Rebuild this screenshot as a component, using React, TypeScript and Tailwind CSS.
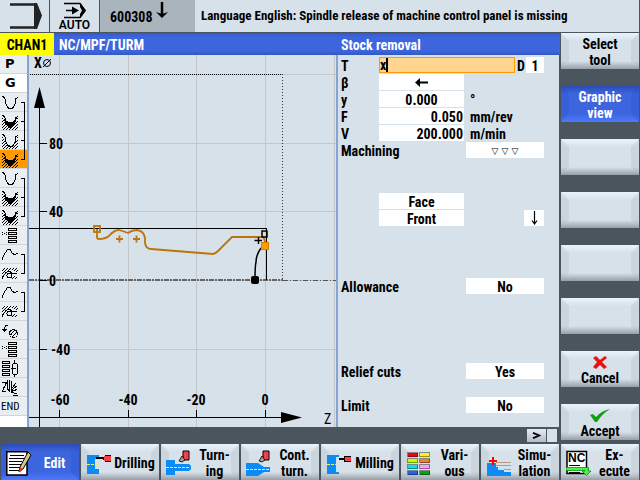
import React from "react";

const FONT = "font-['Liberation_Sans_Narrow','Roboto_Condensed','Liberation_Sans',sans-serif]";

type Bracket = "top" | "mid" | "bottom" | "none";
type StepKind =
  | "P" | "G" | "END"
  | "contour" | "stock" | "residual"
  | "pattern" | "curve" | "mill" | "drill" | "pocket" | "thread";

const STEPS: { kind: StepKind; bracket: Bracket; active?: boolean; label: string }[] = [
  { kind: "P", bracket: "none", label: "Program header" },
  { kind: "G", bracket: "none", label: "G code" },
  { kind: "contour", bracket: "top", label: "Contour" },
  { kind: "stock", bracket: "mid", label: "Stock removal" },
  { kind: "residual", bracket: "mid", label: "Residual removal" },
  { kind: "stock", bracket: "bottom", active: true, label: "Stock removal" },
  { kind: "contour", bracket: "top", label: "Contour" },
  { kind: "stock", bracket: "mid", label: "Stock removal" },
  { kind: "stock", bracket: "bottom", label: "Stock removal" },
  { kind: "pattern", bracket: "none", label: "Positions" },
  { kind: "curve", bracket: "top", label: "Contour" },
  { kind: "mill", bracket: "bottom", label: "Path milling" },
  { kind: "curve", bracket: "top", label: "Contour" },
  { kind: "mill", bracket: "bottom", label: "Path milling" },
  { kind: "drill", bracket: "none", label: "Centering" },
  { kind: "pattern", bracket: "none", label: "Positions" },
  { kind: "pocket", bracket: "none", label: "Pocket" },
  { kind: "thread", bracket: "none", label: "Thread" },
  { kind: "END", bracket: "none", label: "End of program" },
];

const BRACKETS: Record<Bracket, string> = {
  top: "M21 9.5H24.5V19",
  mid: "M24.5 0V19M21 9.5H24",
  bottom: "M24.5 0V9.5H21",
  none: "",
};

const VALLEY = "M2 3.500H3.500L5.500 7V10L8.500 15.500H12.500L15.500 10V6L18 4";

function StepGlyph({ kind }: { kind: StepKind }) {
  switch (kind) {
    case "contour":
      return <path d={VALLEY} fill="none" stroke="#000" />;
    case "stock":
      return (
        <g>
          <path d="M2 4L5 10 8 14H13L18 5V18H2Z" fill="url(#hatch)" />
          <path d="M2 3.500H3.500L5.500 7V9M15.500 9V6L18 4" fill="none" stroke="#000" />
          <path d="M4 7L8 9.500H13L17 6L15 12L12 15.500H9L5 11Z" fill="#000" />
        </g>
      );
    case "residual":
      return (
        <g>
          <path d="M2 4L5 10 8 14H13L18 5V18H2Z" fill="url(#hatch)" />
          <path d={VALLEY} fill="none" stroke="#000" />
        </g>
      );
    case "pattern":
      return (
        <g fill="none" stroke="#000">
          <path d="M8.500 2.500H16.500V4.500H8.500ZM8.500 6.500H16.500V8.500H8.500ZM8.500 10.500H16.500V12.500H8.500ZM8.500 14.500H16.500V16.500H8.500Z" />
          <path d="M2 6.500H3M4 7.500H5M6 6.500H7M2 8.500H3M6 8.500H7" />
        </g>
      );
    case "curve":
      return <path d="M2 14.500L3.500 11 5.500 7.500 7.500 4.500H10L12.500 8.500 14.500 9.500 18 8.500" fill="none" stroke="#000" />;
    case "mill":
      return (
        <g>
          <path d="M2 4H18V8L14 7 10 6 6 8 3 14H2Z" fill="url(#hatch)" />
          <path d="M2 15L4 11 6 8.500 9 7 12 9H17" fill="none" stroke="#000" />
          <circle cx="9.500" cy="11.500" r="2.500" fill="none" stroke="#000" />
          <path d="M11 14L17 11V15H11Z" fill="url(#hatch)" />
        </g>
      );
    case "drill":
      return (
        <g fill="none" stroke="#000">
          <path d="M8 4.500H6L4.500 6.500V10" />
          <path d="M2 8H7L4.500 11.500Z" fill="#000" stroke="none" />
          <circle cx="13.500" cy="12.500" r="4" />
          <path d="M10.500 14L14.500 9.500M12 16L17 11" />
        </g>
      );
    case "pocket":
      return (
        <g fill="none" stroke="#000">
          <path d="M2.500 2.500H9.500V4.500H2.500ZM2.500 6.500H9.500V8.500H2.500ZM2.500 10.500H9.500V12.500H2.500ZM2.500 14.500H9.500V16.500H2.500Z" />
          <path d="M14.500 1V4M14.500 16V18M11 9.500H16" />
          <rect x="12.500" y="4.500" width="5" height="11" rx="2" />
        </g>
      );
    case "thread":
      return (
        <g fill="none" stroke="#000">
          <path d="M2 4.500H6.500L2.500 13.500H6M7.500 2V11L9.500 13.500V2M11.500 3V10" />
          <path d="M11 11.500L16 5M11 12.500L17 8M11 13.500L17 11.500M11 14.500L17 15.500M13 17.500H18M3 10L6 7" />
        </g>
      );
    default:
      return null;
  }
}

function StepList() {
  return (
    <ol className="flex w-[27px] shrink-0 flex-col bg-white" aria-label="Program steps">
      {STEPS.map((step, i) => {
        const tone = step.active ? "bg-[#ff9a00]" : step.kind === "G" ? "bg-white" : "bg-[#e9eef2]";
        const isText = step.kind === "P" || step.kind === "G" || step.kind === "END";
        return (
          <li key={i} className={`h-[19px] shadow-[inset_0_-1px_0_#d0d5d9] ${tone}`}>
            {isText ? (
              <span
                className={
                  step.kind === "END"
                    ? "block pl-px text-[11px] leading-[19px]"
                    : "block pl-[5px] font-['DejaVu_Sans',sans-serif] text-[13px] leading-[18px] font-bold"
                }
              >
                {step.kind}
              </span>
            ) : (
              <svg className="block h-[19px] w-[27px]" viewBox="0 0 27 19" shapeRendering="crispEdges" role="img" aria-label={step.label}>
                <StepGlyph kind={step.kind} />
                <path d={BRACKETS[step.bracket]} fill="none" stroke="#000" />
              </svg>
            )}
          </li>
        );
      })}
    </ol>
  );
}

function Graph() {
  return (
    <svg className="block min-w-0 flex-1" viewBox="29 55 307 372" role="img" aria-label="Workpiece contour">
      <defs>
        <pattern id="hatch" width="3" height="3" patternUnits="userSpaceOnUse">
          <path d="M0 2H1V3H0ZM1 1H2V2H1ZM2 0H3V1H2Z" fill="#000" />
        </pattern>
      </defs>
      <g shapeRendering="crispEdges" fill="none">
        <path d="M59.500 55V427M128.500 55V427M196.500 55V427M265.500 55V427M334.500 55V427M29 74.500H336M29 143.500H336M29 211.500H336M29 280.500H336M29 349.500H336" stroke="#c6c6c8" />
        <path d="M30 74.500H282" stroke="#000" strokeDasharray="1 1" />
        <path d="M282.500 74V280" stroke="#333" strokeDasharray="1 2" />
        <path d="M29 280H283" stroke="#666" strokeWidth="2" strokeDasharray="5 1 2 1" />
        <path d="M283 280.500H336" stroke="#555" strokeDasharray="5 2 1 2" />
        <path d="M39.500 100V427M29 417.500H285M40 143.500H47M40 211.500H47M40 280.500H47M40 349.500H47M59.500 410V417M128.500 410V417M196.500 410V417M265.500 410V417" stroke="#000" />
        <path d="M29 228.500H266.500V280" stroke="#000" />
      </g>
      <path d="M39.500 87L45 108H34ZM302 417.500L281 412V423Z" />
      <g className="text-[14px] font-bold">
        <text x="34" y="68">X</text>
        <text x="324" y="424" className="font-normal">Z</text>
      </g>
      <g fill="none" stroke="#000">
        <circle cx="47" cy="63" r="3.500" />
        <path d="M43 67L51 59" />
      </g>
      <g className="text-[14px] font-bold">
        <text x="49" y="149">80</text>
        <text x="49" y="217">40</text>
        <text x="49" y="286">0</text>
        <text x="51" y="355">-40</text>
        <text x="60" y="405" textAnchor="middle">-60</text>
        <text x="128" y="405" textAnchor="middle">-40</text>
        <text x="196" y="405" textAnchor="middle">-20</text>
        <text x="265" y="405" textAnchor="middle">0</text>
      </g>
      <g fill="none" stroke="#bd7408" strokeWidth="1.800">
        <path d="M97 229V237Q97 239 99 239Q105 239 109 236Q114 230 119 230Q123 231 128 233Q132 230 137 230Q144 231 145 238V243Q146 249 151 249L213 254Q215 254 218 251L232 237H263Q265 239 265 244" />
        <path d="M116 239H123M119.500 235.500V242.500M133 239H140M136.500 235.500V242.500" />
        <rect x="94" y="226" width="6" height="6" />
      </g>
      <path d="M261 248Q256 255 256 262Q255 266 255 280" fill="none" stroke="#000" strokeWidth="1.500" />
      <rect x="251" y="276" width="8" height="8" rx="2" />
      <path d="M254.500 240.500H262M258.500 237V244" stroke="#000" strokeWidth="1.500" />
      <rect x="262" y="231" width="5" height="6" fill="none" stroke="#000" strokeWidth="1.500" />
      <rect x="261.500" y="242.500" width="7" height="7" fill="#ff9a00" stroke="#d88200" />
    </svg>
  );
}

const LABEL = "w-[38px] shrink-0";
const VALUE = "h-4 w-[85px] shrink-0 rounded-none bg-white px-px pt-px leading-4 outline-none";
const PICK = "h-4 appearance-none rounded-none bg-white p-0 pt-px leading-4 outline-none [text-align-last:center]";

function Choice({ id, label, value, className, row }: { id: string; label: string; value: string; className?: string; row: string }) {
  return (
    <div className={`flex h-[17px] justify-between pr-[15px] ${row}`}>
      <label htmlFor={id}>{label}</label>
      <select id={id} defaultValue={value} className={`${PICK} w-[78px] ${className ?? ""}`}>
        <option>{value}</option>
      </select>
    </div>
  );
}

function ParameterForm() {
  return (
    <form className="w-[222px] shrink-0 border-r border-[#4b555e] pt-[2px] pl-[3px] text-[14px] leading-[19px] font-bold" onSubmit={(e) => e.preventDefault()}>
      <div className="flex h-[17px]">
        <label htmlFor="tool" className={LABEL}>T</label>
        <div className="flex h-4 w-[136px] border border-[#ff9a00] bg-[#ffd58f]">
          <input id="tool" defaultValue="x" className="w-[6px] bg-transparent p-0 leading-[14px] outline-none" />
          <span className="w-[2px] bg-black" />
        </div>
        <label htmlFor="edge" className="w-[11px] pl-[2px]">D</label>
        <input id="edge" defaultValue="1" className="h-4 w-[18px] bg-white pt-px text-center leading-4 outline-none" />
      </div>
      <div className="flex h-[17px]">
        <label htmlFor="beta" className={LABEL}>β</label>
        <button type="button" id="beta" aria-label="Holder direction" className={`${VALUE} flex items-center justify-center`}>
          <svg width="13" height="9" viewBox="0 0 13 9"><path d="M0 4.500L5 0V3.500H13V5.500H5V9Z" /></svg>
        </button>
      </div>
      <div className="flex h-[17px]">
        <label htmlFor="gamma" className={LABEL}>y</label>
        <input id="gamma" defaultValue="0.000" className={`${VALUE} text-center`} />
        <span className="pl-[6px]">°</span>
      </div>
      <div className="flex h-[17px]">
        <label htmlFor="feed" className={LABEL}>F</label>
        <input id="feed" defaultValue="0.050" className={`${VALUE} text-right`} />
        <span className="pl-[6px]">mm/rev</span>
      </div>
      <div className="flex h-[17px]">
        <label htmlFor="speed" className={LABEL}>V</label>
        <input id="speed" defaultValue="200.000" className={`${VALUE} text-right`} />
        <span className="pl-[6px]">m/min</span>
      </div>
      <Choice id="machining" label="Machining" value="▽ ▽ ▽" row="" className="font-['DejaVu_Sans',sans-serif] text-[9px] font-bold" />
      <div className="mt-[34px] flex h-[17px] pl-[38px]">
        <select aria-label="Machining side" className={`${PICK} w-[85px]`}><option>Face</option></select>
      </div>
      <div className="flex h-[17px] justify-between pr-[15px] pl-[38px]">
        <select aria-label="Machining position" className={`${PICK} w-[85px]`}><option>Front</option></select>
        <button type="button" aria-label="Infeed direction" className="flex h-4 w-5 items-center justify-center bg-white">
          <svg width="7" height="14" viewBox="0 0 7 14"><path d="M3.500 0V13M1 9.500L3.500 13L6 9.500" fill="none" stroke="#000" strokeWidth="1.200" /></svg>
        </button>
      </div>
      <Choice id="allowance" label="Allowance" value="No" row="mt-[51px]" />
      <Choice id="relief" label="Relief cuts" value="Yes" row="mt-[68px]" />
      <Choice id="limit" label="Limit" value="No" row="mt-[17px]" />
    </form>
  );
}

const KEY =
  "relative isolate flex h-9 w-full items-center text-[14px] leading-4 font-bold before:absolute before:inset-0 before:-z-10 before:border-8 before:content-['']";
const KEY_LIGHT =
  "text-black before:border-x-[#aeb9c44d] before:border-y-transparent before:bg-[linear-gradient(#e9f3fb,#d7e1ea_8px,#d7e1ea_calc(100%-8px),#969ea6)] before:[background-origin:border-box]";
const KEY_BLUE =
  "text-white before:border-x-[#2c4fc84d] before:border-y-transparent before:bg-[linear-gradient(#2b4bb5,#3d66de_8px,#3d66de_calc(100%-8px),#4b79ff)] before:[background-origin:border-box]";

function SideKey({ active, children }: { active?: boolean; children?: React.ReactNode }) {
  return (
    <button type="button" className={`${KEY} flex-col justify-center pt-px ${active ? KEY_BLUE : KEY_LIGHT}`}>
      {children}
    </button>
  );
}

function ModeKey({ icon, active, lines }: { icon: React.ReactNode; active?: boolean; lines: string[] }) {
  return (
    <button type="button" className={`${KEY} justify-between pt-px pr-1 pl-[5px] ${active ? KEY_BLUE : KEY_LIGHT}`}>
      {icon}
      <span className="flex flex-1 flex-col items-center pl-[2px] whitespace-nowrap">
        {lines.map((line) => (
          <span key={line}>{line}</span>
        ))}
      </span>
    </button>
  );
}

const ICON = "block h-7 w-[26px] shrink-0";

const EditIcon = (
  <svg className={ICON} viewBox="0 0 26 28">
    <path d="M.8 2.800H21V26H.8Z" fill="#fff" stroke="#000" strokeWidth="1.500" />
    <path d="M4 6.500H18M3 9.500H18M3 12.500H16M3 15.500H15M3 18.500H14M3 21.500H13" stroke="#000" />
    <path d="M22 3L25 6 17 20 13 23 14 18Z" fill="#d9c58a" stroke="#000" />
    <path d="M14 18L17 20 13 23Z" fill="#f33" />
  </svg>
);
const DrillIcon = (
  <svg className={ICON} viewBox="0 0 26 28" shapeRendering="crispEdges">
    <path d="M1 6H13V10H9V20H13V25H1Z" fill="#0c8bf5" />
    <path d="M1 15.500H13" stroke="#fff34a" strokeDasharray="3 1" />
    <path d="M10 8H17L19 6H25V13H19L17 10H10Z" fill="#000" />
    <path d="M18 7H25V12H18Z" fill="#f4404c" />
  </svg>
);
const TurnIcon = (
  <svg className={ICON} viewBox="0 0 26 28">
    <path d="M0 11H9V15H23L25 17V20L23 22H9V26H0Z" fill="#0c8bf5" />
    <path d="M0 18.500H24" stroke="#fff34a" strokeDasharray="3 1" />
    <path d="M17 2H23V11H17Z" fill="#f4404c" stroke="#000" />
    <path d="M16 7L19 11 16 13 13 12Z" fill="#a89a8a" stroke="#000" strokeWidth=".8" />
  </svg>
);
const ContourIcon = (
  <svg className={ICON} viewBox="0 0 26 28">
    <path d="M0 14H12L18 18H24V23H18L12 27H0Z" fill="#0c8bf5" />
    <path d="M0 20.500H24" stroke="#fff34a" strokeDasharray="3 1" />
    <path d="M17 2H23V11H17Z" fill="#f4404c" stroke="#000" />
    <path d="M16 7L19 11 16 13 13 12Z" fill="#a89a8a" stroke="#000" strokeWidth=".8" />
  </svg>
);
const MillIcon = (
  <svg className={ICON} viewBox="0 0 26 28" shapeRendering="crispEdges">
    <path d="M1 6H13V8H10V23H13V25H1Z" fill="#0c8bf5" />
    <path d="M1 15.500H10" stroke="#fff34a" strokeDasharray="3 1" />
    <path d="M13 9H18V7H25V13H18V11H13Z" fill="#000" />
    <path d="M19 8H25V12H19Z" fill="#f4404c" />
  </svg>
);
const VariousIcon = (
  <svg className={ICON} viewBox="0 0 26 28" shapeRendering="crispEdges">
    {["#f00018", "#fff01e", "#c4ff00", "#ea8236", "#00e4ee", "#ff9cf4", "#1e66e4", "#0aa018"].map((c, i) => (
      <rect key={c} x={1.5 + (i % 2) * 12} y={3.5 + Math.floor(i / 2) * 6} width="10" height="4" fill={c} stroke="#00000066" />
    ))}
  </svg>
);
const SimulationIcon = (
  <svg className={ICON} viewBox="0 0 26 28" shapeRendering="crispEdges">
    <path d="M10 13.500H25M10 16.500H25M18 20.500H25" stroke="#b39c84" />
    <path d="M1 14H10V18H12V21H18V23H25V27H1Z" fill="#0c8bf5" />
    <path d="M3 12H11M7 8V16" stroke="#f00" strokeWidth="2" />
  </svg>
);
const ExecuteIcon = (
  <svg className={ICON} viewBox="0 0 26 28">
    <path d="M1 2.500H20.500V24.500H1Z" fill="#fff" stroke="#000" strokeWidth="1.500" />
    <text x="2" y="13" className="font-['Liberation_Sans',sans-serif] text-[12px] font-bold">NC</text>
    <path d="M3 16.500H14M3 23.500H14" stroke="#000" />
    <path d="M0 18.500H22.500V22H25L20.500 26.500 16 22H19V21.500H0Z" fill="#4cf04c" stroke="#0a900a" strokeWidth=".8" />
  </svg>
);

export default function App() {
  return (
    <div className={`flex min-h-screen flex-col bg-[#4b555e] text-black ${FONT}`}>
      <header className="flex h-[33px] border-r border-b border-[#4b555e] bg-[#d7e1ea]">
        <div className="w-[50px] shrink-0 border-r border-[#4b555e]">
          <svg className="block" width="49" height="32" viewBox="0 0 49 32">
            <path d="M10 4.500H36M10 27.500H36" stroke="#222" strokeWidth="2.500" />
            <path d="M34 3H37L42 15.500 37 29H34V24Z" fill="#222" />
          </svg>
        </div>
        <div className="flex w-[50px] shrink-0 flex-col items-center border-r border-[#4b555e] pt-[2px]">
          <svg className="block" width="24" height="17" viewBox="0 0 24 17">
            <path d="M1 1.500H17L22 8.500 17 15.500H1" fill="none" stroke="#000" strokeWidth="1.500" />
            <path d="M17 1L23 8.500 17 16V12L19 8.500 17 5Z" />
            <path d="M3 8.500H10" stroke="#000" strokeWidth="1.500" />
            <path d="M9 4.500L16 8.500 9 12.500Z" />
          </svg>
          <span className="font-['Roboto',sans-serif] text-[12px] leading-[13px] font-semibold">AUTO</span>
        </div>
        <div className="flex w-[95px] shrink-0 bg-[#aab4bc] pl-[10px]">
          <span className="w-[43px] pt-[9px] text-[14px] leading-4 font-bold">600308</span>
          <svg className="ml-[3px] block" width="12" height="20" viewBox="0 0 12 20">
            <path d="M6 2V14" stroke="#000" strokeWidth="2.500" />
            <path d="M0 12L6 14 12 12 6 18Z" />
          </svg>
        </div>
        <p className="min-w-0 flex-1 pt-2 pl-[6px] text-[13px] leading-4 font-bold whitespace-nowrap">
          Language English: Spindle release of machine control panel is missing
        </p>
      </header>

      <div className="flex flex-1">
        <main className="flex min-w-0 flex-1 flex-col">
          <div className="flex h-[22px] bg-[linear-gradient(#3358cc,#3d66de_4px,#3d66de_18px,#3358c0)] text-[14px] leading-[24px] font-bold text-white">
            <span className="w-[54px] shrink-0 bg-[#ffff00] text-center text-black">CHAN1</span>
            <span className="min-w-0 flex-1 pl-[5px]">NC/MPF/TURM</span>
            <h1 className="w-[219px] shrink-0">Stock removal</h1>
          </div>
          <div className="flex flex-1 bg-[#d7e1ea]">
            <StepList />
            <div className="flex min-w-0 flex-1 border-x-2 border-[#86a3d2]">
              <Graph />
            </div>
            <ParameterForm />
          </div>
          <div className="flex h-[17px] justify-end gap-px pt-[2px] pr-[3px]">
            <button type="button" aria-label="More soft keys" className="flex h-[13px] w-[19px] items-center justify-center bg-[linear-gradient(#e4edf5,#b4bdc6)]">
              <svg width="9" height="7" viewBox="0 0 9 7"><path d="M1 .8L7.500 3.500 1 6.200" fill="none" stroke="#000" strokeWidth="1.800" /></svg>
            </button>
            <span className="h-[13px] w-[10px] bg-[#d7e1ea]" />
          </div>
        </main>
        <aside className="flex w-20 shrink-0 flex-col gap-[17px] px-px pb-1">
          <SideKey><span>Select</span><span>tool</span></SideKey>
          <SideKey active><span>Graphic</span><span>view</span></SideKey>
          <SideKey />
          <SideKey />
          <SideKey />
          <SideKey />
          <SideKey>
            <svg className="h-[17px] w-4" viewBox="0 -2 16 17"><path d="M1 3L4 1 8 5 13 1 15 3 10 7 15 12 12 14 8 10 4 14 1 12 5 7Z" fill="#ee1111" /></svg>
            <span>Cancel</span>
          </SideKey>
          <SideKey>
            <svg className="h-[17px] w-5" viewBox="0 -2 20 17"><path d="M0 7L3 6 6 9Q11 3 20 1Q12 6 7 14H5Z" fill="#12a012" /></svg>
            <span>Accept</span>
          </SideKey>
        </aside>
      </div>

      <nav className="grid grid-cols-8" aria-label="Operating modes">
        <div className="px-px"><ModeKey active icon={EditIcon} lines={["Edit"]} /></div>
        <div className="px-px"><ModeKey icon={DrillIcon} lines={["Drilling"]} /></div>
        <div className="px-px"><ModeKey icon={TurnIcon} lines={["Turn-", "ing"]} /></div>
        <div className="px-px"><ModeKey icon={ContourIcon} lines={["Cont.", "turn."]} /></div>
        <div className="px-px"><ModeKey icon={MillIcon} lines={["Milling"]} /></div>
        <div className="px-px"><ModeKey icon={VariousIcon} lines={["Vari-", "ous"]} /></div>
        <div className="px-px"><ModeKey icon={SimulationIcon} lines={["Simu-", "lation"]} /></div>
        <div className="px-px"><ModeKey icon={ExecuteIcon} lines={["Ex-", "ecute"]} /></div>
      </nav>
    </div>
  );
}
